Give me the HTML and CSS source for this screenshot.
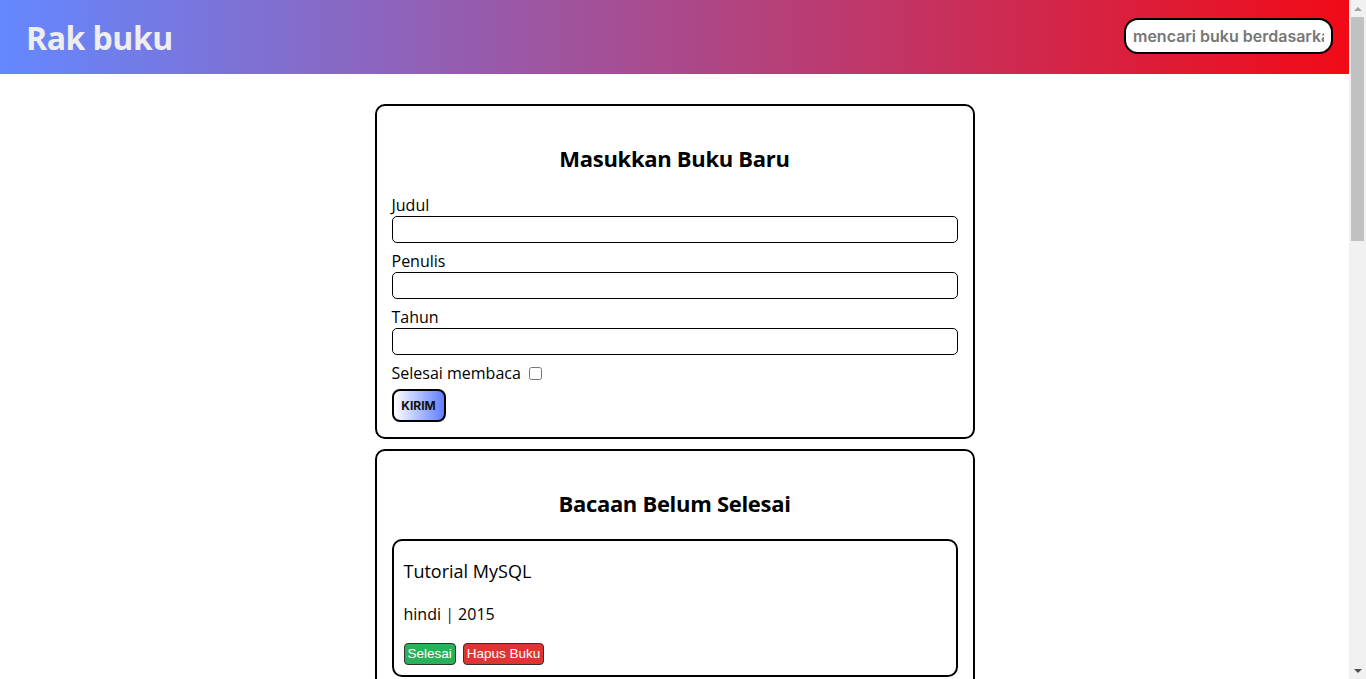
FILE: index.html
```
<!DOCTYPE html>
<html lang="id">
<head>
<meta charset="utf-8">
<title>Rak buku</title>
<link rel="stylesheet" href="styles.css">
</head>
<body>
<header class="topbar">
  <h1 class="brand">Rak buku</h1>
  <input class="search" type="text" placeholder="mencari buku berdasarkan judul">
</header>
<main class="main">
  <section class="card">
    <h2 class="card-title">Masukkan Buku Baru</h2>
    <form class="form">
      <label class="label" for="judul">Judul</label>
      <input class="field" id="judul" type="text">
      <label class="label" for="penulis">Penulis</label>
      <input class="field" id="penulis" type="text">
      <label class="label" for="tahun">Tahun</label>
      <input class="field" id="tahun" type="number">
      <div class="check-row">
        <label class="label-inline" for="selesai">Selesai membaca</label>
        <input class="check" id="selesai" type="checkbox">
      </div>
      <button class="submit" type="button">KIRIM</button>
    </form>
  </section>
  <section class="card">
    <h2 class="card-title">Bacaan Belum Selesai</h2>
    <div class="books">
      <article class="book">
        <h3 class="book-title">Tutorial MySQL</h3>
        <p class="book-meta">hindi <span class="sep">|</span> 2015</p>
        <div class="actions"><button class="btn btn-green">Selesai</button><button class="btn btn-red">Hapus Buku</button></div>
      </article>
      <article class="book">
        <h3 class="book-title">Belajar JavaScript</h3>
        <p class="book-meta">dicoding <span class="sep">|</span> 2020</p>
        <div class="actions"><button class="btn btn-green">Selesai</button><button class="btn btn-red">Hapus Buku</button></div>
      </article>
      <article class="book">
        <h3 class="book-title">Dasar Pemrograman Web</h3>
        <p class="book-meta">dicoding <span class="sep">|</span> 2021</p>
        <div class="actions"><button class="btn btn-green">Selesai</button><button class="btn btn-red">Hapus Buku</button></div>
      </article>
    </div>
  </section>
  <section class="card">
    <h2 class="card-title">Bacaan Sudah Selesai</h2>
    <div class="books">
      <article class="book">
        <h3 class="book-title">Laskar Pelangi</h3>
        <p class="book-meta">Andrea Hirata <span class="sep">|</span> 2005</p>
        <div class="actions"><button class="btn btn-yellow">Belum Selesai</button><button class="btn btn-red">Hapus Buku</button></div>
      </article>
      <article class="book">
        <h3 class="book-title">Bumi Manusia</h3>
        <p class="book-meta">Pramoedya Ananta Toer <span class="sep">|</span> 1980</p>
        <div class="actions"><button class="btn btn-yellow">Belum Selesai</button><button class="btn btn-red">Hapus Buku</button></div>
      </article>
      <article class="book">
        <h3 class="book-title">Negeri 5 Menara</h3>
        <p class="book-meta">Ahmad Fuadi <span class="sep">|</span> 2009</p>
        <div class="actions"><button class="btn btn-yellow">Belum Selesai</button><button class="btn btn-red">Hapus Buku</button></div>
      </article>
      <article class="book">
        <h3 class="book-title">Ronggeng Dukuh Paruk</h3>
        <p class="book-meta">Ahmad Tohari <span class="sep">|</span> 1982</p>
        <div class="actions"><button class="btn btn-yellow">Belum Selesai</button><button class="btn btn-red">Hapus Buku</button></div>
      </article>
    </div>
  </section>
</main>
<div class="scrollbar" aria-hidden="true">
  <div class="sb-arrow sb-up"></div>
  <div class="sb-track"><div class="sb-thumb"></div></div>
  <div class="sb-arrow sb-down"></div>
</div>
</body>
</html>
```
FILE: styles.css
```
* { box-sizing: border-box; }
html, body { margin: 0; padding: 0; }
body {
  font-family: "Open Sans", "Noto Sans", sans-serif;
  color: #000;
  background: #fff;
  padding-right: 17px;
}
.scrollbar {
  position: fixed;
  top: 0;
  right: 0;
  width: 17px;
  height: 100vh;
  background: #f1f1f1;
  display: flex;
  flex-direction: column;
}
.sb-arrow {
  height: 17px;
  display: flex;
  align-items: center;
  justify-content: center;
}
.sb-arrow::before {
  content: "";
  width: 0;
  height: 0;
  border-left: 4px solid transparent;
  border-right: 4px solid transparent;
}
.sb-up::before { border-bottom: 4px solid #a3a3a3; }
.sb-down::before { border-top: 4px solid #505050; }
.sb-track {
  flex: 1;
  padding: 0 2px;
}
.sb-thumb {
  height: 224px;
  background: #c1c1c1;
}
.topbar {
  height: 74px;
  display: flex;
  align-items: center;
  justify-content: space-between;
  padding: 0 16px 0 26px;
  background: linear-gradient(to right, #6488ff, #f20a16);
}
.brand {
  margin: 0;
  font-family: "Open Sans", sans-serif;
  font-size: 32px;
  font-weight: 700;
  letter-spacing: -0.5px;
  color: #eeeeee;
}
.search {
  width: 209px;
  height: 36px;
  margin-bottom: 3px;
  border: 2px solid #000;
  border-radius: 14px;
  padding: 0 7px;
  font-family: "Inter", "Liberation Sans", sans-serif;
  font-size: 16px;
  font-weight: 600;
  background: #fff;
  outline: none;
}
.search::placeholder { color: #777; }
.main {
  display: flex;
  flex-direction: column;
  align-items: center;
  gap: 10px;
  padding: 30px 0 60px;
}
.card {
  width: 600px;
  border: 2px solid #000;
  border-radius: 10px;
  padding: 16px 15px 15px;
}
.card-title {
  margin: 21px 0 21px;
  text-align: center;
  font-size: 22px;
  font-weight: 700;
  letter-spacing: -0.3px;
}
.form { display: flex; flex-direction: column; }
.label { font-size: 16px; line-height: 22px; }
.field {
  height: 27px;
  margin: 0 0 7px;
  border: 1.5px solid #000;
  border-radius: 5px;
  font-size: 14px;
  outline: none;
}
.check-row { display: flex; align-items: center; gap: 8px; height: 22px; }
.label-inline { font-size: 16px; line-height: 22px; }
.check { margin: 0; width: 13px; height: 13px; }
.submit {
  align-self: flex-start;
  margin-top: 5px;
  width: 54px;
  height: 33px;
  border: 2px solid #000;
  border-radius: 8px;
  background: linear-gradient(to right, #ffffff, #5f7fff);
  font-family: "Inter", "Liberation Sans", sans-serif;
  font-size: 12px;
  font-weight: 700;
  color: #111;
  padding: 0;
}
.books { display: flex; flex-direction: column; gap: 10px; }
.book {
  border: 2px solid #000;
  border-radius: 10px;
  padding: 10px 10px 10px;
}
.book-title {
  margin: 8px 0 0;
  font-size: 18px;
  font-weight: 400;
  line-height: 24px;
}
.book-meta {
  margin: 20px 0 0;
  font-size: 16px;
  line-height: 22px;
}
.sep { color: #3a0a66; }
.actions { display: flex; gap: 7px; margin-top: 18px; }
.btn {
  font-family: "Liberation Sans", Arial, sans-serif;
  font-size: 13.5px;
  color: #fff;
  border: 1px solid #333;
  border-radius: 4px;
  padding: 2px 3px;
  line-height: 16px;
}
.btn-green { background: #27b25a; }
.btn-red { background: #e03434; }
.btn-yellow { background: #d4a017; }
```
